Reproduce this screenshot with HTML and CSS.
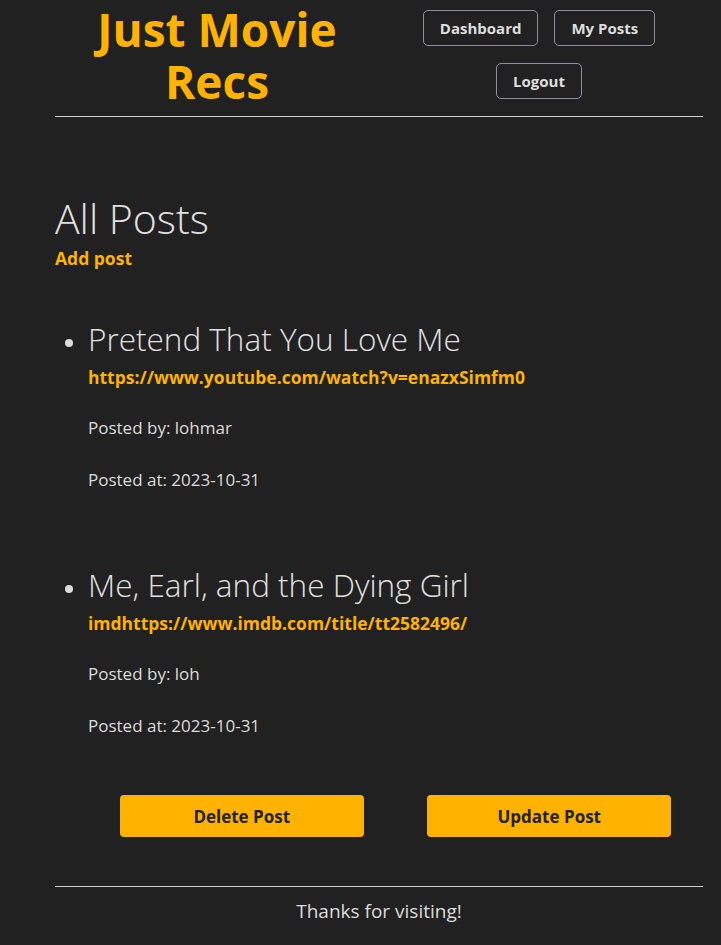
FILE: index.html
```html
<!DOCTYPE html>
<html>
<head>
<meta charset="utf-8">
<link rel="stylesheet" href="styles.css">
</head>
<body>
<div class="page">
  <header class="header">
    <h1 class="title">Just Movie<br>Recs</h1>
    <nav class="nav">
      <a class="nav-btn">Dashboard</a>
      <a class="nav-btn">My Posts</a>
      <a class="nav-btn">Logout</a>
    </nav>
  </header>
  <main class="main">
    <h2 class="heading">All Posts</h2>
    <a class="add-link">Add post</a>
    <ul class="posts">
      <li class="post">
        <h3 class="post-title">Pretend That You Love Me</h3>
        <a class="post-link">https://www.youtube.com/watch?v=enazxSimfm0</a>
        <p class="meta meta-by">Posted by: lohmar</p>
        <p class="meta meta-at">Posted at: 2023-10-31</p>
      </li>
      <li class="post">
        <h3 class="post-title">Me, Earl, and the Dying Girl</h3>
        <a class="post-link">imdhttps://www.imdb.com/title/tt2582496/</a>
        <p class="meta meta-by">Posted by: loh</p>
        <p class="meta meta-at">Posted at: 2023-10-31</p>
        <div class="actions">
          <button class="action-btn">Delete Post</button>
          <button class="action-btn">Update Post</button>
        </div>
      </li>
    </ul>
  </main>
  <footer class="footer">Thanks for visiting!</footer>
</div>
</body>
</html>
```
FILE: styles.css
```css
html, body {
  margin: 0;
  padding: 0;
  background: #212121;
}
body {
  font-family: "Open Sans", "Noto Sans", sans-serif;
  color: #dcdcdc;
}
.page {
  width: 648px;
  margin-left: 55px;
}
.header {
  display: grid;
  grid-template-columns: 1fr 1fr;
  height: 116px;
  border-bottom: 1px solid #cfcfcf;
}
.title {
  margin: 3px 0 0;
  font-size: 46px;
  line-height: 52px;
  font-weight: 700;
  color: #ffb300;
  text-align: center;
}
.nav {
  display: flex;
  flex-wrap: wrap;
  justify-content: center;
  align-content: flex-start;
  column-gap: 16px;
  row-gap: 17px;
  padding-top: 10px;
  padding-right: 4px;
}
.nav-btn {
  box-sizing: border-box;
  height: 36px;
  line-height: 34px;
  padding: 0 16px;
  border: 1px solid #8c8ca2;
  border-radius: 5px;
  font-size: 15px;
  font-weight: 700;
  color: #dedede;
}
.main {
  padding-top: 77px;
}
.heading {
  margin: 0;
  font-size: 41px;
  line-height: 48px;
  font-weight: 300;
  color: #e0e0e0;
}
.add-link {
  display: block;
  margin-top: 4px;
  font-size: 17.5px;
  line-height: 24px;
  font-weight: 700;
  color: #ffb300;
}
.posts {
  margin: 49px 0 0;
  padding: 0 0 0 33px;
}
.post {
  margin-bottom: 73px;
}
.post:last-child {
  margin-bottom: 49px;
}
.post::marker {
  font-size: 22px;
  color: #dcdcdc;
}
.post-title {
  margin: 0;
  font-size: 31.5px;
  line-height: 40px;
  font-weight: 300;
  color: #e0e0e0;
}
.post-link {
  display: block;
  margin-top: 6px;
  font-size: 17.5px;
  line-height: 24px;
  font-weight: 700;
  color: #ffb300;
}
.meta {
  margin: 27px 0 0;
  font-size: 17px;
  line-height: 24px;
  color: #dcdcdc;
}
.meta-at {
  margin-top: 28px;
}
.actions {
  display: flex;
  justify-content: space-around;
  margin-top: 57px;
}
.action-btn {
  width: 244px;
  height: 42px;
  border: none;
  border-radius: 4px;
  background: #ffb300;
  color: #222;
  font-family: inherit;
  font-size: 17px;
  font-weight: 700;
}
.footer {
  border-top: 1px solid #cfcfcf;
  text-align: center;
  font-size: 19px;
  line-height: 48px;
  color: #dcdcdc;
}
```
